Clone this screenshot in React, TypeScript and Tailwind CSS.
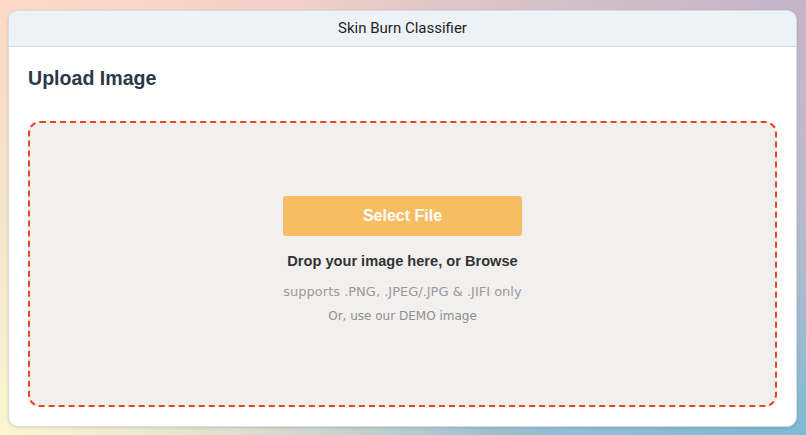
export default function App() {
  return (
    <div className="h-[435px] w-[806px] overflow-hidden bg-[radial-gradient(circle_at_100%_0%,#c3b4c9,transparent_55%),radial-gradient(circle_at_0%_100%,#fbf7d0,transparent_55%),linear-gradient(to_bottom_right,#fdd4c6,#dcc7c7_50%,#6fbbd8)] pl-[8px] pt-[10px]">
      <div className="flex h-[417px] w-[789px] flex-col overflow-hidden rounded-[10px] border border-[#d6dce3] bg-white shadow-[0_1px_3px_rgba(0,0,0,0.12)]">
        <div className="flex h-9 shrink-0 items-center justify-center border-b border-[#d3d9e0] bg-[#edf2f7]">
          <span className="font-['Roboto',sans-serif] text-[15px] text-[#1f1f1f]">Skin Burn Classifier</span>
        </div>
        <div className="flex flex-1 flex-col px-[19px] pb-[19px] pt-[19px]">
          <h2 className="font-['Liberation_Sans',Arial,sans-serif] text-[19.6px] font-bold leading-6 text-[#2d3748]">
            Upload Image
          </h2>
          <div className="mt-[31px] flex flex-1 flex-col items-center rounded-[12px] border-2 border-dashed border-[#e8471f] bg-[#f2f0ef] pt-[73px]">
            <button className="h-10 w-[239px] rounded-[3px] bg-[#f6bd62] font-['Liberation_Sans',Arial,sans-serif] text-[16px] font-bold text-white">
              Select File
            </button>
            <p className="mt-[15px] font-['Liberation_Sans',Arial,sans-serif] text-[14.6px] font-bold leading-5 text-[#333333]">
              Drop your image here, or Browse
            </p>
            <p className="mt-[11px] font-['DejaVu_Sans',sans-serif] text-[13px] leading-5 text-[#9a9a9a]">
              supports .PNG, .JPEG/.JPG &amp; .JIFI only
            </p>
            <p className="mt-[5px] font-['DejaVu_Sans',sans-serif] text-[12px] leading-[18px] text-[#8f8f8f]">
              Or, use our DEMO image
            </p>
          </div>
        </div>
      </div>
    </div>
  );
}
